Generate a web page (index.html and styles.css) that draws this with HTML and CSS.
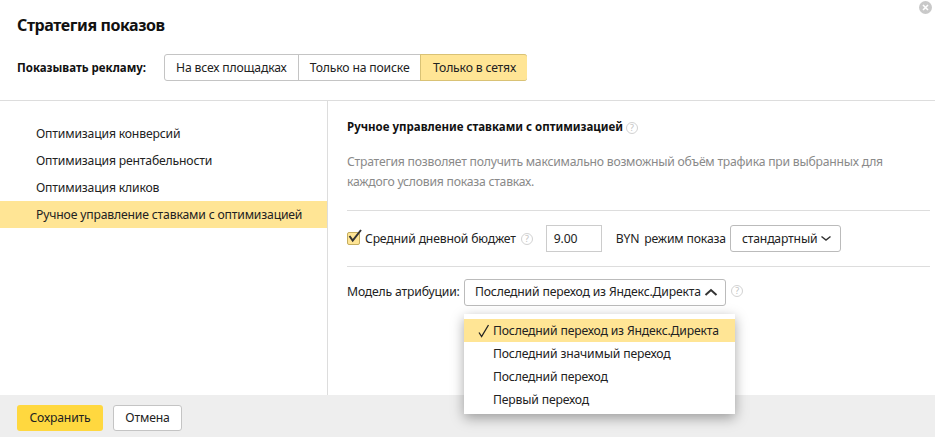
FILE: index.html
```html
<!DOCTYPE html>
<html lang="ru">
<head>
<meta charset="utf-8">
<title>Стратегия показов</title>
<link rel="stylesheet" href="styles.css">
</head>
<body>
<div class="dialog">
  <svg class="close" width="13" height="13" viewBox="0 0 13 13"><circle cx="6.5" cy="6.5" r="6.5" fill="#c9c9c9"/><path d="M4 4l5 5M9 4l-5 5" stroke="#fff" stroke-width="1.6"/></svg>
  <header class="head">
    <h1 class="title">Стратегия показов</h1>
    <div class="show-row">
      <span class="show-label">Показывать рекламу:</span>
      <div class="tabs">
        <span class="tab">На всех площадках</span>
        <span class="tab">Только на поиске</span>
        <span class="tab tab-on">Только в сетях</span>
      </div>
    </div>
  </header>
  <main class="body">
    <nav class="side">
      <div class="side-item">Оптимизация конверсий</div>
      <div class="side-item">Оптимизация рентабельности</div>
      <div class="side-item">Оптимизация кликов</div>
      <div class="side-item side-on">Ручное управление ставками с оптимизацией</div>
    </nav>
    <section class="content">
      <h2 class="sub">Ручное управление ставками с оптимизацией <span class="help help-sub">?</span></h2>
      <p class="desc">Стратегия позволяет получить максимально возможный объём трафика при выбранных для каждого условия показа ставках.</p>
      <div class="row row-budget">
        <span class="check"><svg width="16" height="16" viewBox="0 0 16 16"><path d="M2.5 7l3.2 4.6L14 1" fill="none" stroke="#333" stroke-width="2"/></svg></span>
        <span class="budget-label">Средний дневной бюджет</span>
        <span class="help">?</span>
        <span class="input">9.00</span>
        <span class="cur">BYN</span>
        <span class="mode">режим показа</span>
        <span class="select select-mode">стандартный <svg width="12" height="7" viewBox="0 0 12 7"><path d="M1.5 1.5L6 5l4.5-3.5" fill="none" stroke="#333" stroke-width="1.5"/></svg></span>
      </div>
      <div class="row row-model">
        <span class="model-label">Модель атрибуции:</span>
        <span class="select select-model">Последний переход из Яндекс.Директа <svg width="14" height="9" viewBox="0 0 14 9"><path d="M1.5 7L7 2l5.5 5" fill="none" stroke="#333" stroke-width="2"/></svg></span>
        <span class="help help-model">?</span>
        <div class="menu">
          <div class="menu-item menu-on"><svg class="tick" width="12" height="14" viewBox="0 0 12 14"><path d="M1 8.5l2.6 4L10.5 1" fill="none" stroke="#222" stroke-width="1.3"/></svg>Последний переход из Яндекс.Директа</div>
          <div class="menu-item">Последний значимый переход</div>
          <div class="menu-item">Последний переход</div>
          <div class="menu-item">Первый переход</div>
        </div>
      </div>
    </section>
  </main>
  <footer class="foot">
    <span class="btn btn-save">Сохранить</span>
    <span class="btn btn-cancel">Отмена</span>
  </footer>
</div>
</body>
</html>
```

FILE: styles.css
```css
* { box-sizing: border-box; }
html, body { margin: 0; padding: 0; }
body { width: 935px; height: 437px; overflow: hidden; background: #fff; font: 12.2px/16px "Noto Sans", sans-serif; letter-spacing: -.17px; color: #222; }
.dialog { position: relative; width: 935px; height: 437px; display: flex; flex-direction: column; }
.close { position: absolute; top: 1px; left: 919px; }
.head { height: 101px; padding: 15px 0 0 17px; border-bottom: 1px solid #ddd; }
.title { margin: 0; font-size: 16px; line-height: 21px; font-weight: 700; letter-spacing: -.4px; color: #111; }
.show-row { display: flex; align-items: center; margin-top: 18px; }
.show-label { width: 147px; font-size: 11.5px; font-weight: 700; letter-spacing: 0; color: #111; white-space: nowrap; }
.tabs { display: flex; height: 27px; border: 1px solid #c4c4c4; border-radius: 3px; }
.tab { display: flex; align-items: center; padding: 0 11px; border-right: 1px solid #c4c4c4; white-space: nowrap; }
.tab:last-child { border-right: 0; }
.tab-on { background: #ffe595; border-radius: 0 3px 3px 0; margin: -1px; padding: 0 11px 0 11.5px; width: 107px; border: 1px solid #d9c275; }
.body { flex: 1; display: flex; min-height: 0; }
.side { width: 328px; flex: none; padding-top: 19px; border-right: 1px solid #ddd; }
.side-item { height: 27px; padding-left: 36px; line-height: 27px; white-space: nowrap; }
.side-on { background: #ffe595; }
.content { flex: 1; padding: 18px 5px 0 19px; }
.sub { margin: 0; font-size: 11.5px; line-height: 16px; font-weight: 700; letter-spacing: 0; color: #111; }
.help { display: inline-flex; align-items: center; justify-content: center; width: 12px; height: 12px; border: 1px solid #d2d2d2; border-radius: 50%; font-size: 9px; line-height: 10px; font-weight: 400; color: #c2c2c2; }
.help-sub { margin-left: 0; vertical-align: 0; }
.desc { margin: 17px 0 0; height: 40px; width: 540px; line-height: 20px; letter-spacing: -.23px; color: #8a8a8a; }
.row { display: flex; align-items: center; }
.row-budget { height: 57px; margin-top: 18px; border-top: 1px solid #ddd; border-bottom: 1px solid #ddd; }
.check { position: relative; flex: none; width: 13px; height: 13px; background: #ffe595; border: 1px solid #c4ad5f; border-radius: 2px; }
.check svg { position: absolute; left: -1px; top: -4px; }
.budget-label { margin-left: 5px; }
.row-budget .help { margin-left: 5px; }
.input { width: 56px; height: 27px; margin-left: 13px; padding-left: 7px; border: 1px solid #ccc; line-height: 25px; }
.cur { margin-left: 14px; }
.mode { margin-left: 5px; }
.select { display: flex; align-items: center; height: 27px; border: 1px solid #bbb; border-radius: 3px; white-space: nowrap; }
.select svg { flex: none; }
.select-mode { width: 111px; margin-left: 4px; padding-left: 11px; gap: 3px; }
.row-model { position: relative; height: 50px; }
.model-label { width: 117px; flex: none; white-space: nowrap; }
.select-model { width: 262px; padding-left: 10px; gap: 3px; }
.help-model { margin-left: 5px; margin-top: -2px; }
.menu { position: absolute; left: 117px; top: 47px; width: 271px; height: 100px; padding-top: 5px; background: #fff; box-shadow: 0 4px 12px rgba(0,0,0,.35); }
.menu-item { position: relative; height: 23px; padding-left: 29px; line-height: 23px; white-space: nowrap; }
.menu-on { background: #ffe595; }
.tick { position: absolute; left: 14px; top: 5px; }
.foot { height: 42px; padding: 10px 0 0 17px; background: #eee; display: flex; align-items: flex-start; gap: 10px; }
.btn { display: flex; align-items: center; justify-content: center; height: 26px; border-radius: 3px; }
.btn-save { width: 86px; background: #ffd83f; }
.btn-cancel { width: 69px; background: #fff; border: 1px solid #c4c4c4; }
```
